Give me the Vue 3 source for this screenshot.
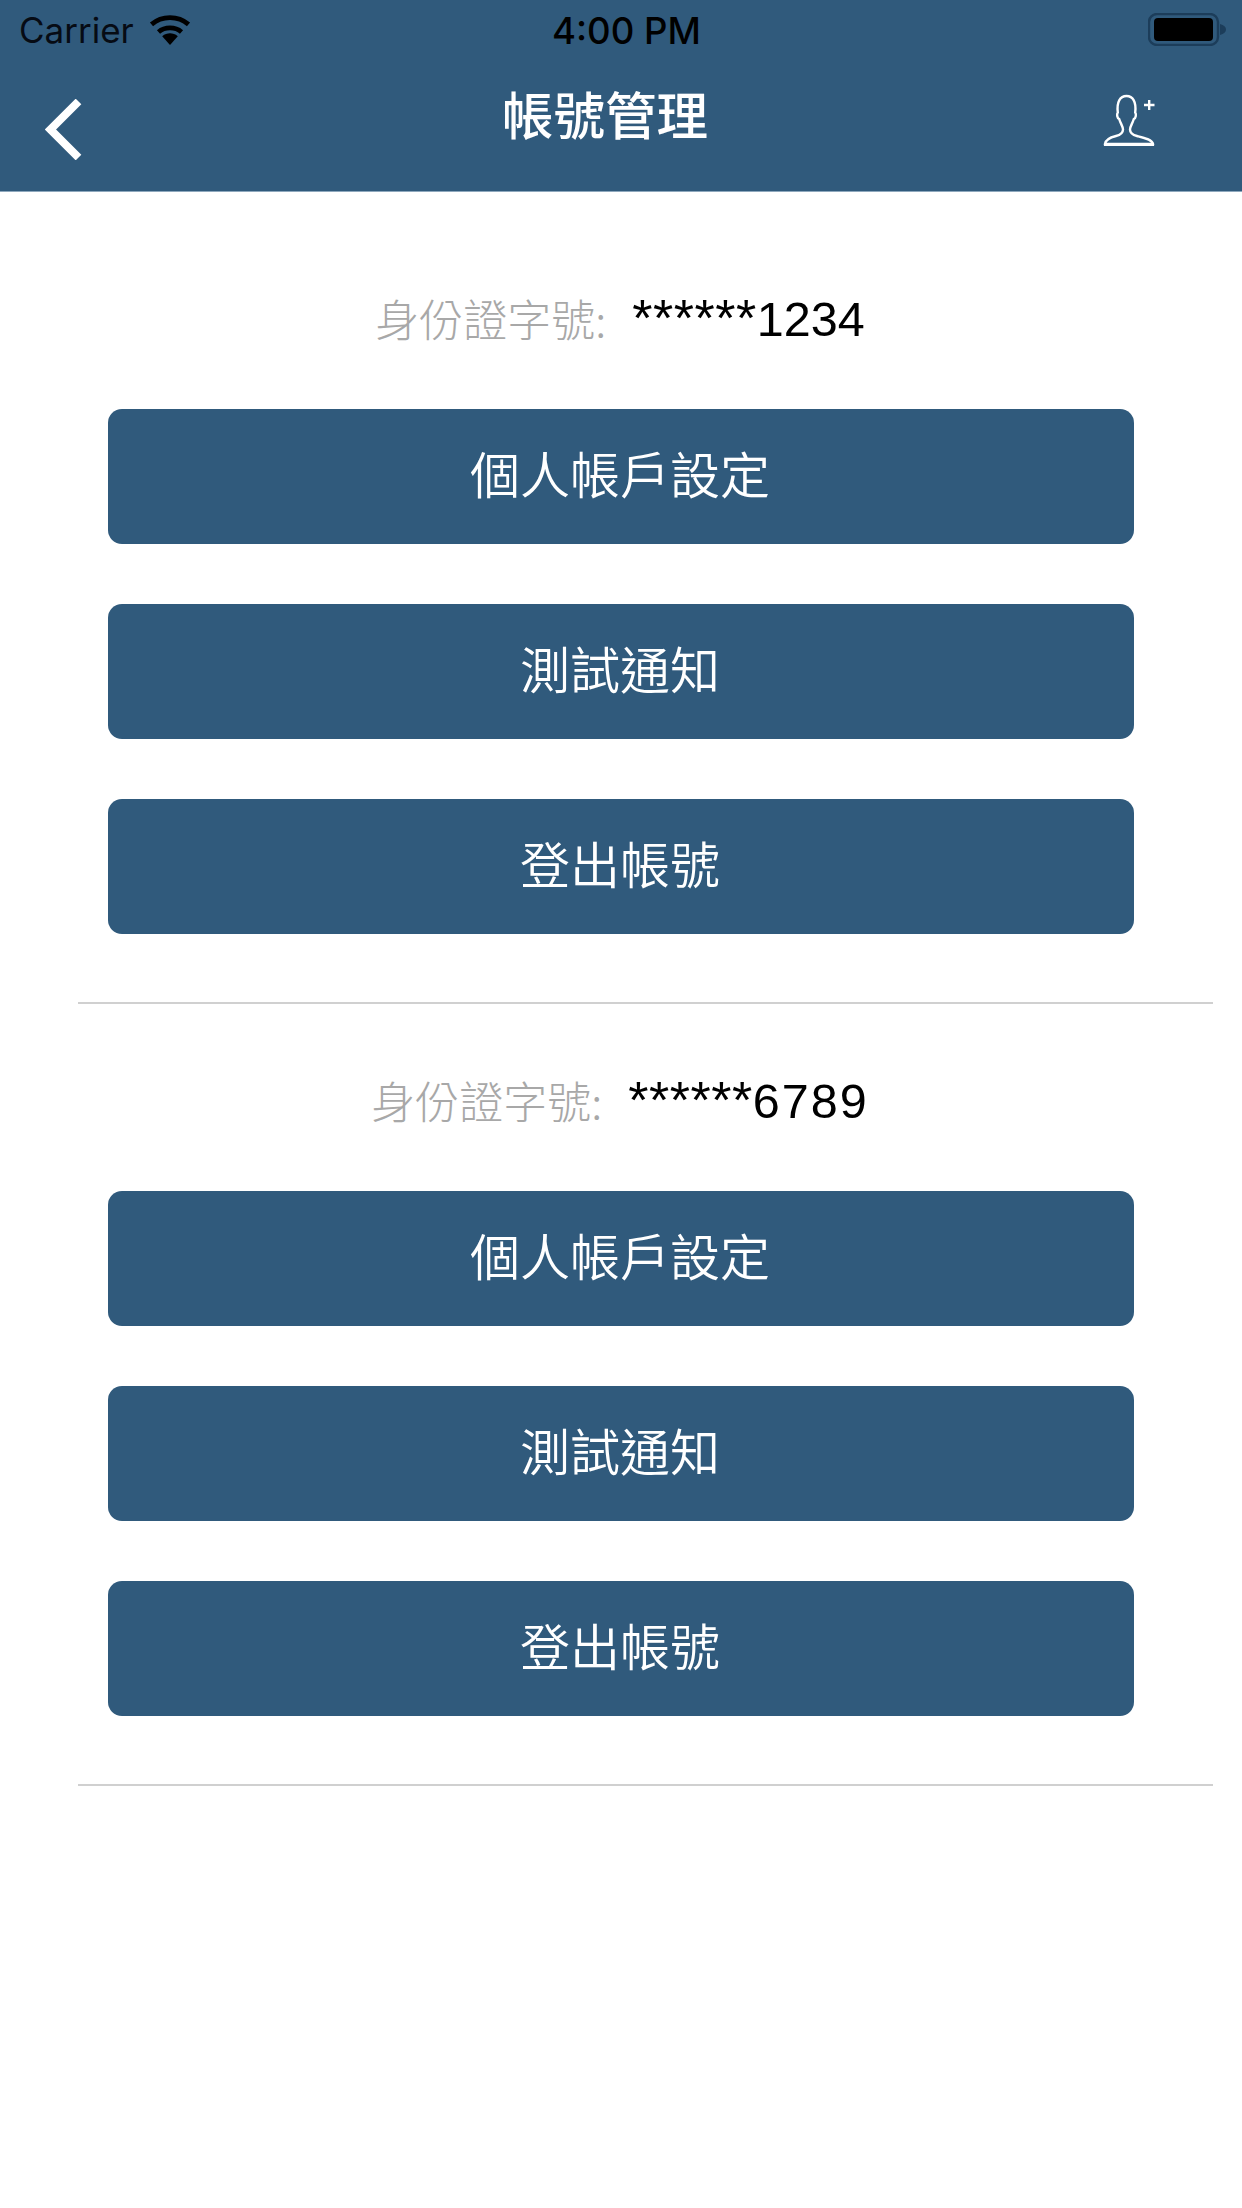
<script setup>
const accounts = [
  { mask: '******', digits: '1234', wide: false },
  { mask: '******', digits: '6789', wide: true },
]
const actions = ['個人帳戶設定', '測試通知', '登出帳號']
</script>

<template>
  <div class="page">
    <header class="head">
      <div class="status">
        <div class="status-left">
          <span class="carrier">Carrier</span>
          <svg class="wifi" width="42" height="30" viewBox="0 0 42 30">
            <path d="M21 30 L13.2 21.2 C18 17.4 24 17.4 28.8 21.2 Z" fill="#000"/>
            <path d="M9.5 17 C15.8 11.6 26.2 11.6 32.5 17" fill="none" stroke="#000" stroke-width="4.8"/>
            <path d="M2.5 9.4 C13 0.4 29 0.4 39.5 9.4" fill="none" stroke="#000" stroke-width="4.8"/>
          </svg>
        </div>
        <span class="time">4:00 PM</span>
        <svg class="battery" width="78" height="33" viewBox="0 0 78 33">
          <rect x="1" y="1" width="69" height="31" rx="8" fill="none" stroke="#1c3d5a" stroke-width="2.4"/>
          <rect x="6" y="5" width="59" height="23" rx="4" fill="#000"/>
          <path d="M72 11 C76 12 78 14 78 16.5 C78 19 76 21 72 22 Z" fill="#1c3d5a"/>
        </svg>
      </div>
      <nav class="nav">
        <div class="nav-left">
          <svg width="37" height="61" viewBox="0 0 37 61">
            <path d="M33.5 2.5 L5.5 30.5 L33.5 58.5" fill="none" stroke="#fff" stroke-width="8"/>
          </svg>
        </div>
        <h1 class="title">帳號管理</h1>
        <div class="nav-right">
          <svg width="70" height="70" viewBox="0 0 70 70">
            <path d="M15 59 C15.5 54.5 20 52.5 26 51 C30.5 49.8 33 48 33 44.5 C33 41.5 30.5 38.5 29.2 34 C27 33 26.6 29 27.8 27.5 C26.5 17 30 11 36.5 11 C43 11 46.5 17 45.2 27.5 C46.4 29 46 33 43.8 34 C42.5 38.5 40 41.5 40 44.5 C40 48 42.5 49.8 47 51 C53 52.5 62.5 54.5 63 59 Z" fill="none" stroke="#fff" stroke-width="2.4"/>
            <path d="M14 59.5 H64" stroke="#fff" stroke-width="2.8"/>
            <path d="M54 20 H64.5 M59.2 15 V25" stroke="#fff" stroke-width="2.4"/>
          </svg>
        </div>
      </nav>
    </header>
    <main class="list">
      <section v-for="acc in accounts" :key="acc.digits" class="account">
        <div class="id-row">
          <span class="id-label">身份證字號:</span>
          <span class="id-value"><span class="id-mask">{{ acc.mask }}</span><span :class="['id-digits', { wide: acc.wide }]">{{ acc.digits }}</span></span>
        </div>
        <div class="actions">
          <button v-for="a in actions" :key="a" class="btn">{{ a }}</button>
        </div>
      </section>
    </main>
  </div>
</template>

<style scoped>
.page {
  width: 1242px;
  height: 2208px;
  background: #fff;
  font-family: "Liberation Sans", "Noto Sans CJK TC", sans-serif;
  overflow: hidden;
}
.head {
  height: 191px;
  background: #305a7c;
  border-bottom: 1px solid #8ea8bd;
}
.status {
  height: 60px;
  display: flex;
  align-items: center;
  justify-content: space-between;
  padding: 0 16px 0 19px;
  position: relative;
}
.status-left {
  display: flex;
  align-items: center;
  gap: 15px;
}
.carrier {
  font-family: Inter, sans-serif;
  font-size: 35px;
  color: #060b14;
  line-height: 60px;
}
.wifi {
  margin-top: -1px;
}
.time {
  position: absolute;
  left: 552px;
  top: 0;
  font-family: Inter, sans-serif;
  font-weight: 500;
  font-size: 36.6px;
  line-height: 62px;
  color: #000;
}
.battery {
  margin-top: -1px;
}
.nav {
  height: 131px;
  display: flex;
  align-items: flex-start;
}
.nav-left {
  width: 150px;
  padding: 39px 0 0 45px;
  box-sizing: border-box;
}
.title {
  flex: 1;
  margin: 0;
  text-align: center;
  font-family: "Noto Sans CJK TC", sans-serif;
  font-size: 51.5px;
  font-weight: 500;
  line-height: 70px;
  padding-top: 18px;
  color: #fff;
}
.nav-right {
  width: 182px;
  padding: 25px 0 0 30px;
  box-sizing: border-box;
}
.list {
  padding-top: 30px;
}
.account {
  margin: 0 29px 0 78px;
  padding-top: 69px;
  padding-bottom: 68px;
  border-bottom: 2px solid #d0d0d0;
}
.id-row {
  height: 60px;
  display: flex;
  align-items: center;
  justify-content: center;
  gap: 26px;
  margin: 0 81px 58px 30px;
}
.id-label {
  font-family: "Noto Sans CJK TC", sans-serif;
  font-weight: 300;
  font-size: 44px;
  color: #a8a8a8;
  line-height: 60px;
  margin-bottom: 6px;
}
.id-value {
  color: #000;
  line-height: 60px;
  white-space: nowrap;
  margin-top: 6px;
}
.id-mask {
  font-size: 52px;
  letter-spacing: 0.5px;
}
.id-digits {
  font-size: 48.5px;
}
.id-digits.wide {
  letter-spacing: 2px;
}
.actions {
  display: flex;
  flex-direction: column;
  gap: 60px;
  padding: 0 79px 0 30px;
}
.btn {
  height: 135px;
  border: 0;
  border-radius: 14px;
  background: #305a7c;
  color: #fff;
  font-family: "Noto Sans CJK TC", sans-serif;
  font-weight: 350;
  font-size: 50px;
  padding: 0 2px 10px 0;
}
</style>
